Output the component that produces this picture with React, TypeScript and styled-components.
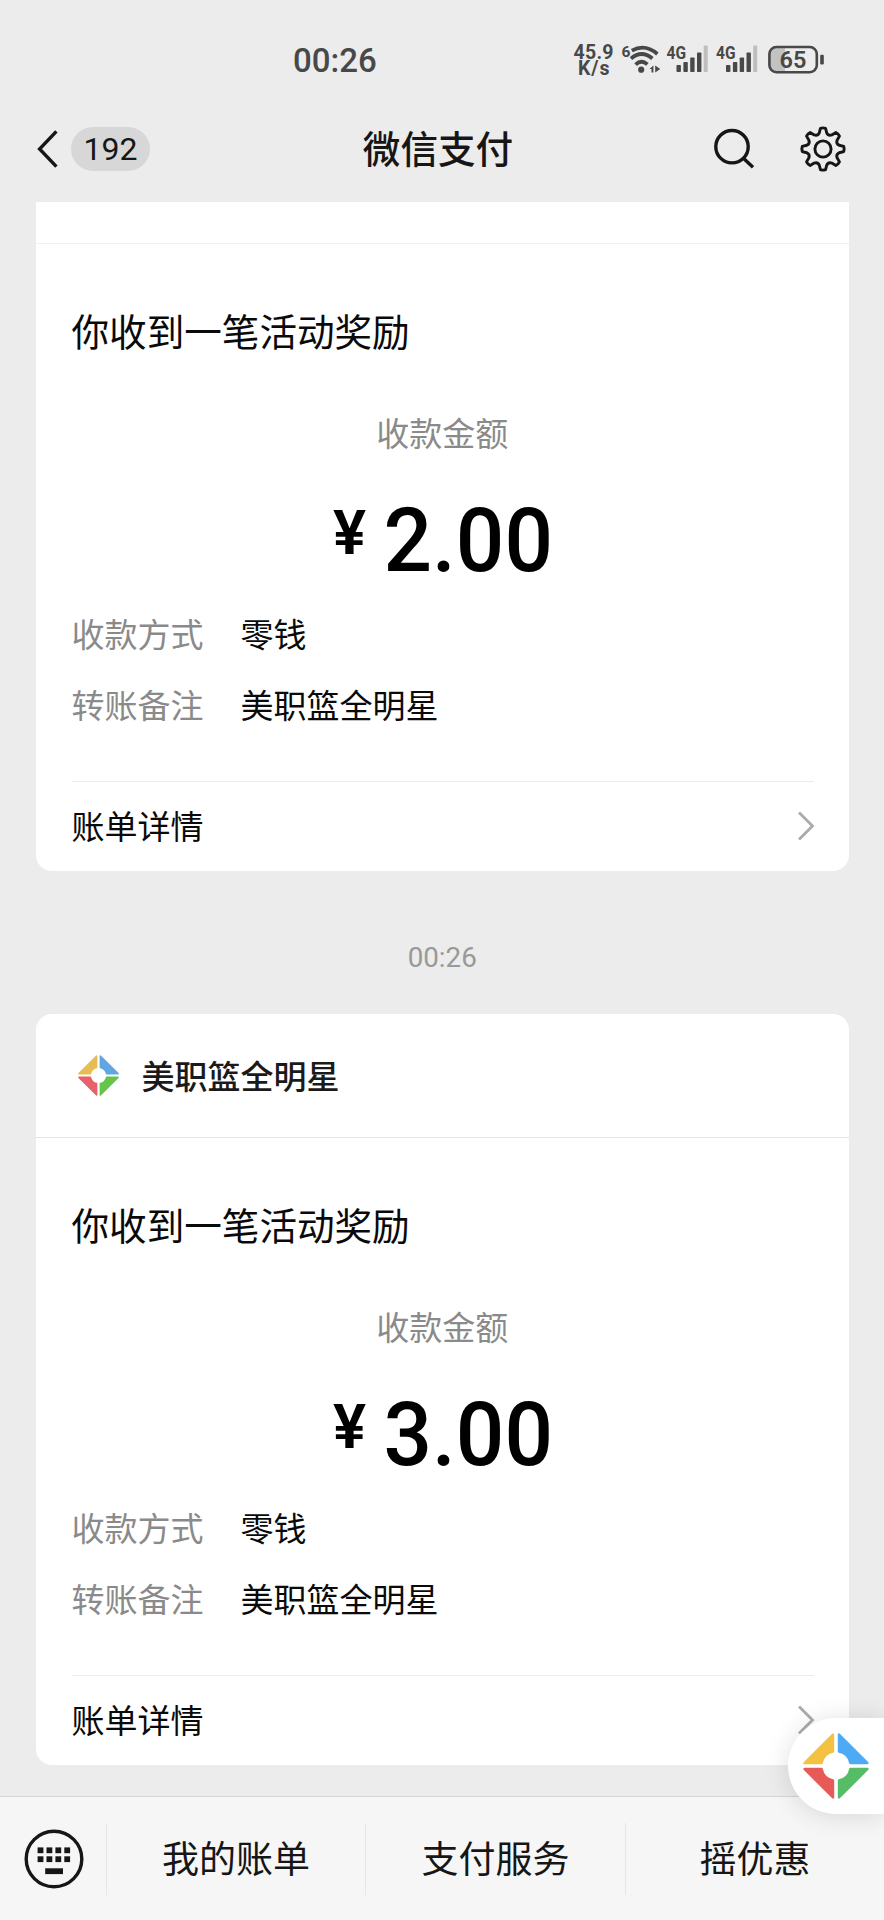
import React from "react";
import styled, { createGlobalStyle } from "styled-components";

const GlobalStyle = createGlobalStyle`
  * { box-sizing: border-box; }
  body { margin: 0; background: #ececec; }
`;

const cjk = `"Noto Sans CJK SC", sans-serif`;
const latin = `Roboto, sans-serif`;

const Screen = styled.div`
  width: 884px;
  height: 1920px;
  display: flex;
  flex-direction: column;
  background: #ececec;
  font-family: ${cjk};
  color: #0a0a0a;
  overflow: hidden;
  position: relative;
`;

const StatusBar = styled.header`
  height: 96px;
  flex: none;
  padding: 36px 60px 0 293px;
  display: flex;
  align-items: flex-start;
  justify-content: space-between;
  font-family: ${latin};
  color: #484848;
`;

const Clock = styled.span`
  font-size: 33px;
  font-weight: 500;
  line-height: 49px;
`;

const StatusIcons = styled.svg`
  display: block;
  width: 254px;
  height: 48px;
  font-family: ${latin};
  fill: #484848;
  overflow: visible;
`;

const NavBar = styled.nav`
  height: 106px;
  flex: none;
  display: grid;
  grid-template-columns: 300px 1fr 300px;
  align-items: center;
  padding: 0 38px 0 36px;
`;

const BackGroup = styled.div`
  display: flex;
  align-items: center;
  gap: 11px;
`;

const Badge = styled.span`
  width: 79px;
  height: 44px;
  border-radius: 22px;
  background: #d7d7d7;
  color: #161616;
  font: 400 32px/45px ${latin};
  text-align: center;
`;

const NavTitle = styled.h1`
  margin: 0;
  font-size: 37.6px;
  font-weight: 500;
  line-height: 52px;
  text-align: center;
  color: #161616;
  white-space: nowrap;
  transform: translate(-3px, -2px);
`;

const NavActions = styled.div`
  display: flex;
  justify-content: flex-end;
  gap: 44px;
`;

const Icon = styled.svg`
  display: block;
  flex: none;
  overflow: visible;
`;

const Feed = styled.main`
  flex: 1;
  min-height: 0;
  padding: 0 35px 0 35.5px;
  display: flex;
  flex-direction: column;
`;

const Card = styled.article<{ $cut?: boolean }>`
  background: #fff;
  border-radius: ${(p) => (p.$cut ? "0 0 16px 16px" : "16px")};
  flex: none;
`;

const CardHeader = styled.div<{ $cut?: boolean }>`
  height: ${(p) => (p.$cut ? 42 : 124)}px;
  border-bottom: 1px solid ${(p) => (p.$cut ? "#f0f0f0" : "#e4e4e4")};
  padding: 0 36px 0 42px;
  display: flex;
  align-items: center;
  gap: 23px;
`;

const Merchant = styled.span`
  font-size: 33px;
  font-weight: 500;
  line-height: 48px;
  color: #1a1a1a;
  margin-top: -2px;
`;

const CardBody = styled.div`
  height: 537px;
  padding: 61px 36px 0 36px;
`;

const Headline = styled.h2`
  margin: 0;
  font-size: 37.6px;
  font-weight: 400;
  line-height: 50px;
`;

const AmountLabel = styled.div`
  margin-top: 53px;
  font-size: 33px;
  line-height: 48px;
  text-align: center;
  color: #8a8a8a;
`;

const Amount = styled.div`
  margin-top: 32px;
  height: 106px;
  padding-left: 5px;
  display: flex;
  justify-content: center;
  align-items: flex-start;
  font-family: ${latin};
  font-weight: 500;
  color: #000;
`;

const Currency = styled.span`
  font-size: 62px;
  line-height: 72px;
  font-weight: 600;
  margin: 9px 14px 0 0;
`;

const Figure = styled.span`
  font-size: 89px;
  line-height: 106px;
  transform: scaleX(0.96);
`;

const Details = styled.dl`
  margin: 15px 0 0;
  display: grid;
  grid-template-columns: 169px 1fr;
  row-gap: 23px;
  font-size: 33px;
  line-height: 48px;
`;

const Term = styled.dt`
  color: #8a8a8a;
`;

const Value = styled.dd`
  margin: 0;
`;

const CardFooter = styled.div`
  height: 90px;
  margin: 0 35px 0 36px;
  padding-bottom: 1px;
  border-top: 1px solid #ededed;
  display: flex;
  align-items: center;
  justify-content: space-between;
  font-size: 33px;
  line-height: 48px;
`;

const FooterLabel = styled.span`
  margin-top: -3px;
`;

const TimeStamp = styled.time`
  flex: none;
  height: 143px;
  padding-top: 71px;
  font: 400 27.8px/32px ${latin};
  color: #999;
  text-align: center;
`;

const TabBar = styled.footer`
  flex: none;
  height: 124px;
  border-top: 1px solid #d6d6d6;
  background: #f6f6f6;
  display: grid;
  grid-template-columns: 106px 259px 260px 259px;
  align-items: center;
`;

const KeyboardButton = styled.div`
  padding-left: 23.5px;
`;

const Tab = styled.div`
  height: 72px;
  border-left: 1px solid #e6e6e6;
  font-size: 37px;
  line-height: 68px;
  text-align: center;
  color: #161616;
`;

const FloatingButton = styled.div`
  position: absolute;
  right: 0;
  top: 1718px;
  width: 96px;
  height: 96px;
  border-radius: 48px 0 0 48px;
  background: #fff;
  box-shadow: 0 2px 26px rgba(0, 0, 0, 0.13);
  display: flex;
  align-items: center;
  padding-left: 15px;
`;

const bars = [
  [0, 29, 7],
  [6.9, 26, 10],
  [13.7, 21.5, 14.5],
  [20.5, 16.5, 19.5],
];

function Signal({ x }: { x: number }) {
  return (
    <g transform={`translate(${x} 0)`}>
      <text x="-10" y="23" fontSize="17.5" fontWeight="700" textLength="19.5" lengthAdjust="spacingAndGlyphs">4G</text>
      {bars.map(([bx, by, h]) => (
        <rect key={bx} x={bx} y={by} width="4.4" height={h} rx="0.8" />
      ))}
      <rect x="27.2" y="9.5" width="4" height="26.5" rx="0.8" fill="#bebebe" />
    </g>
  );
}

function StatusCluster() {
  return (
    <StatusIcons viewBox="0 0 254 48">
      <text x="3.5" y="23" fontSize="19.5" fontWeight="700" textLength="40">45.9</text>
      <text x="8" y="39" fontSize="19.5" fontWeight="700" textLength="31.5">K/s</text>
      <text x="51.4" y="20.7" fontSize="15.5" fontWeight="700">6</text>
      <g fill="none" stroke="#484848" strokeWidth="3.8">
        <path d="M61.8 14.6Q75 7.4 87.4 18" />
        <path d="M61 22.6Q71.5 13.6 82.4 22.4" />
        <path d="M65.6 28.6Q71.3 23.2 77.4 28.4" />
      </g>
      <circle cx="71.2" cy="33.7" r="3.1" />
      <path d="M83.4 29.6v7h-1.9v-3.6h-2zM85.2 29.6l5 3.5-5 3.5z" />
      <Signal x={106.5} />
      <Signal x={156} />
      <path d="M205 11h10v25h-10q-6-1-6-7V18q0-6 6-7z" fill="#c2c2c2" />
      <rect x="199.4" y="11" width="47.4" height="25.2" rx="7" fill="none" stroke="#484848" strokeWidth="2.6" />
      <rect x="250.2" y="18.8" width="3.6" height="9.6" rx="1.2" />
      <text x="209.4" y="31.9" fontSize="23.5" fontWeight="600" textLength="27">65</text>
    </StatusIcons>
  );
}

function ColorWheel({ size, hole, colors }: { size: number; hole: number; colors: string[] }) {
  const quadrant = `M-3 -31.5V-${hole}A${hole} ${hole} 0 0 0 -${hole} -3H-31.5z`;
  return (
    <Icon width={size} height={size} viewBox="-33 -33 66 66">
      {colors.map((c, i) => (
        <path
          key={c}
          d={quadrant}
          transform={`rotate(${i * 90})`}
          fill={c}
          stroke={c}
          strokeWidth="2.4"
          strokeLinejoin="round"
        />
      ))}
    </Icon>
  );
}

function Gear() {
  const points: string[] = [];
  for (let i = 0; i < 8; i++) {
    const at = (r: number, deg: number) => {
      const a = ((i * 45 + deg - 90) * Math.PI) / 180;
      return `${(r * Math.cos(a)).toFixed(2)} ${(r * Math.sin(a)).toFixed(2)}`;
    };
    points.push(
      `${i ? "L" : "M"}${at(16.6, -13)}L${at(20.9, -7)}Q${at(21.6, 0)} ${at(20.9, 7)}L${at(16.6, 13)}Q${at(13.9, 22.5)} ${at(16.6, 32)}`
    );
  }
  return (
    <Icon width="46" height="46" viewBox="-23 -23 46 46" fill="none" stroke="#161616" strokeWidth="2.9" strokeLinejoin="round">
      <path d={points.join("") + "z"} />
      <circle r="8.1" />
    </Icon>
  );
}

function Keyboard() {
  return (
    <Icon width="60" height="60" viewBox="-30 -30 60 60" fill="#161616">
      <circle r="27.8" fill="none" stroke="#161616" strokeWidth="3.4" />
      {[-11.6, -2.7].map((y) =>
        [-16.4, -7.5, 1.4, 10.3].map((x) => <rect key={`${x},${y}`} x={x} y={y} width="5.8" height="5.8" />)
      )}
      <rect x="-8.8" y="9.3" width="17.8" height="5.8" />
    </Icon>
  );
}

interface PaymentProps {
  amount: string;
  cut?: boolean;
}

function PaymentCard({ amount, cut }: PaymentProps) {
  return (
    <Card $cut={cut}>
      <CardHeader $cut={cut}>
        {!cut && (
          <>
            <ColorWheel size={41} hole={13} colors={["#e6bd50", "#60a6e0", "#66c548", "#e6616b"]} />
            <Merchant>美职篮全明星</Merchant>
          </>
        )}
      </CardHeader>
      <CardBody>
        <Headline>你收到一笔活动奖励</Headline>
        <AmountLabel>收款金额</AmountLabel>
        <Amount>
          <Currency>¥</Currency>
          <Figure>{amount}</Figure>
        </Amount>
        <Details>
          <Term>收款方式</Term>
          <Value>零钱</Value>
          <Term>转账备注</Term>
          <Value>美职篮全明星</Value>
        </Details>
      </CardBody>
      <CardFooter>
        <FooterLabel>账单详情</FooterLabel>
        <Icon width="17" height="30" viewBox="0 0 17 30" fill="none" stroke="#ababab" strokeWidth="2.8">
          <path d="M2 1.5L15.5 15L2 28.5" />
        </Icon>
      </CardFooter>
    </Card>
  );
}

export default function App() {
  return (
    <Screen>
      <GlobalStyle />
      <StatusBar>
        <Clock>00:26</Clock>
        <StatusCluster />
      </StatusBar>
      <NavBar>
        <BackGroup>
          <Icon width="24" height="40" viewBox="0 0 24 40" fill="none" stroke="#161616" strokeWidth="3.4">
            <path d="M20.4 2.4L3.6 20L20.4 37.6" />
          </Icon>
          <Badge>192</Badge>
        </BackGroup>
        <NavTitle>微信支付</NavTitle>
        <NavActions>
          <Icon width="46" height="46" viewBox="0 0 46 46" fill="none" stroke="#161616" strokeWidth="3.4">
            <circle cx="22" cy="20.7" r="16.2" />
            <path d="M33.4 32.2L43 41.3" />
          </Icon>
          <Gear />
        </NavActions>
      </NavBar>
      <Feed>
        <PaymentCard amount="2.00" cut />
        <TimeStamp>00:26</TimeStamp>
        <PaymentCard amount="3.00" />
      </Feed>
      <TabBar>
        <KeyboardButton>
          <Keyboard />
        </KeyboardButton>
        <Tab>我的账单</Tab>
        <Tab>支付服务</Tab>
        <Tab>摇优惠</Tab>
      </TabBar>
      <FloatingButton>
        <ColorWheel size={66} hole={14.4} colors={["#f3c243", "#4faaf5", "#55bd65", "#e65a57"]} />
      </FloatingButton>
    </Screen>
  );
}
